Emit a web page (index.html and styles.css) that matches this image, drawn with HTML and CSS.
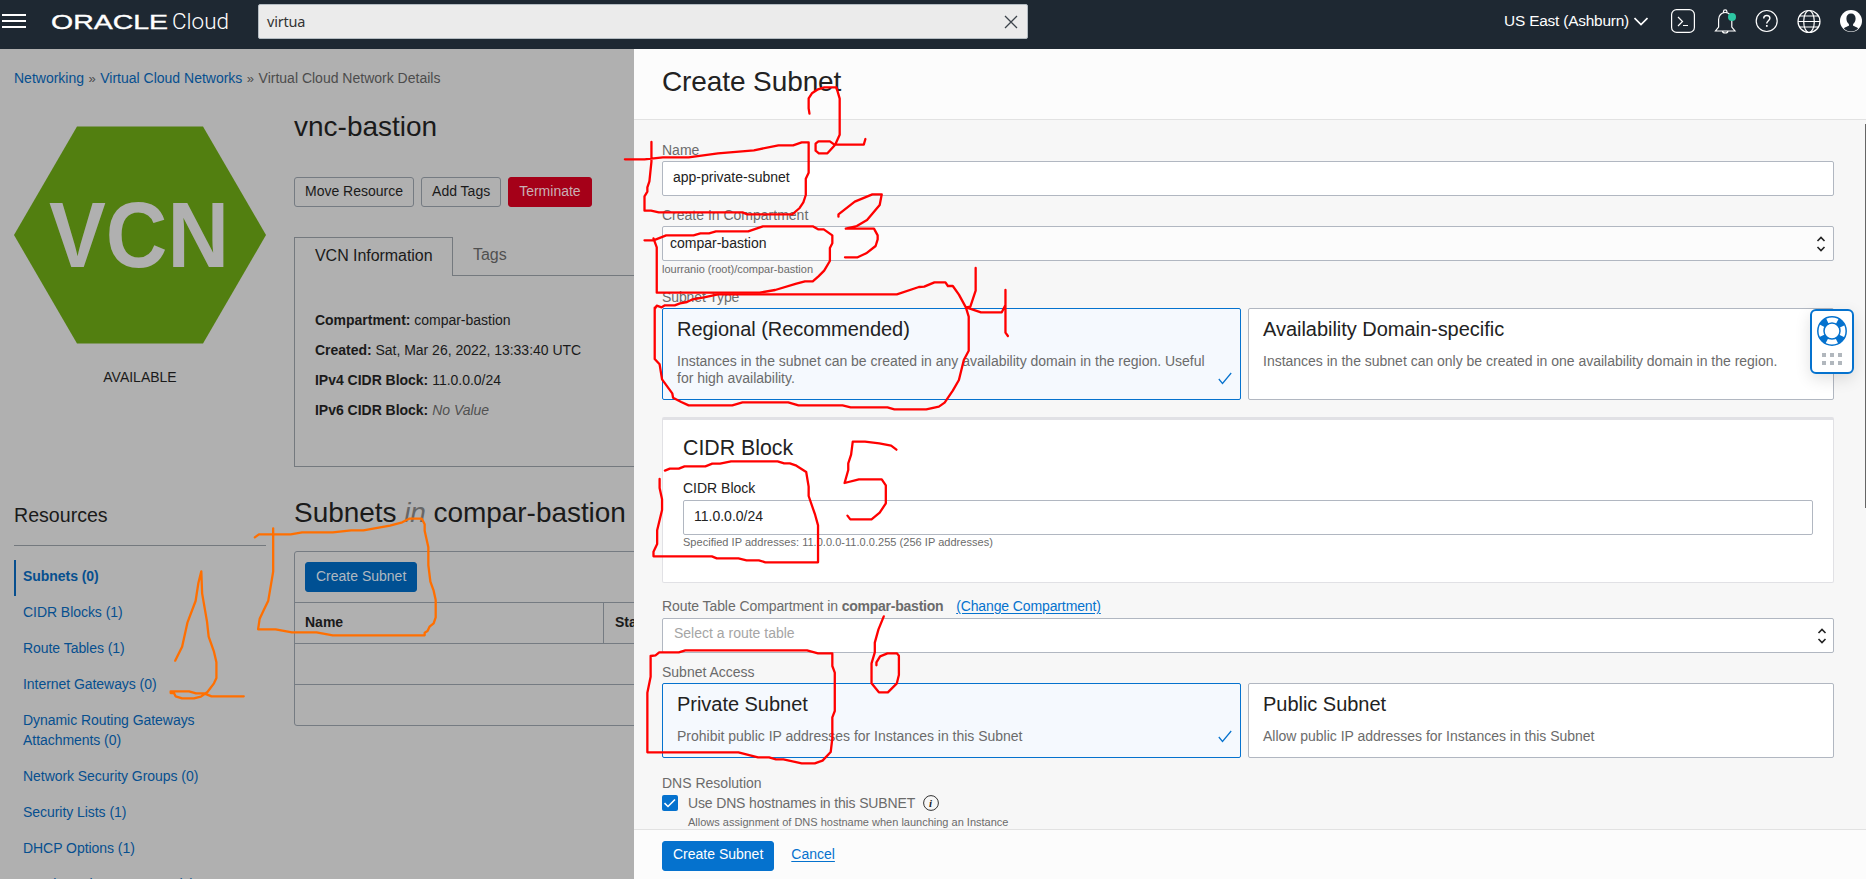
FILE: index.html
```html
<!DOCTYPE html>
<html lang="en">
<head>
<meta charset="utf-8">
<title>Create Subnet</title>
<link rel="stylesheet" href="styles.css">
</head>
<body>
<div class="app">
  <header class="topbar">
    <div class="burger"><i></i><i></i><i></i></div>
    <svg class="logo" width="180" height="30" viewBox="0 0 180 30">
      <text class="logo-oracle" x="-1" y="21.500" textLength="117" lengthAdjust="spacingAndGlyphs">ORACLE</text>
      <text class="logo-cloud" x="120" y="22" textLength="57" lengthAdjust="spacingAndGlyphs">Cloud</text>
    </svg>
    <div class="search"><span>virtua</span>
      <svg width="14" height="14" viewBox="0 0 14 14"><path d="M1 1l12 12M13 1L1 13" fill="none" stroke="#3c434b" stroke-width="1.3"/></svg>
    </div>
    <div class="region">US East (Ashburn)
      <svg width="14" height="9" viewBox="0 0 14 9"><path d="M.5 1l6.500 6.500L13.500 1" fill="none" stroke="#fff" stroke-width="1.700"/></svg>
    </div>
    <svg class="tools" width="196" height="30" viewBox="1670 6 196 30" fill="none" stroke="#fff" stroke-width="1.2">
      <rect x="1671.600" y="9.600" width="22.800" height="22.800" rx="5"/>
      <path d="M1678 17l4.500 4.500-4.500 4.500M1683 25.500h5"/>
      <path d="M1715.500 31h19.500l-3.200-4v-7.500c0-4-2.800-7-6.600-7s-6.600 3-6.600 7V27zM1722.500 31c0 1.300 1.100 2 2.700 2s2.700-.7 2.700-2M1723.500 12.500v-1a1.700 1.700 0 0 1 3.400 0v1"/>
      <circle cx="1732" cy="17" r="4" fill="#2dc6a3" stroke="none"/>
      <circle cx="1766.700" cy="21" r="10.500"/>
      <path d="M1763.700 18.500c0-1.900 1.200-3 3.100-3s3.100 1.100 3.100 2.800c0 2.300-3.200 2.600-3.200 5.200" stroke-width="1.400"/>
      <path d="M1766.800 25v1.800" stroke-width="1.700"/>
      <circle cx="1809" cy="21.500" r="11"/><ellipse cx="1809" cy="21.500" rx="5.300" ry="11"/>
      <path d="M1798 21.500h22M1799.500 16h19M1799.500 27h19"/>
      <circle cx="1851" cy="21" r="11" fill="#fff" stroke="none"/>
      <path d="M1851 13.500c-3 0-4.600 2-4.600 5 0 2.600 1 4.400 2.500 5.600v1.600c-1.600.8-4 1.300-5 2.800 1.700 1.900 4.300 3 7.100 3s5.400-1.100 7.100-3c-1-1.500-3.400-2-5-2.800v-1.600c1.500-1.200 2.500-3 2.500-5.600 0-3-1.600-5-4.600-5z" fill="#1e2832" stroke="none"/>
    </svg>
  </header>

  <div class="main">
    <section class="page">
      <nav class="crumbs"><a>Networking</a> <b>»</b> <a>Virtual Cloud Networks</a> <b>»</b> <span>Virtual Cloud Network Details</span></nav>
      <div class="cols">
        <aside class="side">
          <svg class="hex" width="252" height="218" viewBox="0 0 252 218">
            <path d="M0 109L63 .500h126L252 109l-63 108.500H63z" fill="#527f10"/>
            <text class="hex-text" x="35" y="140.500" textLength="180" lengthAdjust="spacingAndGlyphs">VCN</text>
          </svg>
          <div class="status">AVAILABLE</div>
          <h3 class="res-title">Resources</h3>
          <ul class="res-list">
            <li class="active">Subnets (0)</li>
            <li>CIDR Blocks (1)</li>
            <li>Route Tables (1)</li>
            <li>Internet Gateways (0)</li>
            <li>Dynamic Routing Gateways Attachments (0)</li>
            <li>Network Security Groups (0)</li>
            <li>Security Lists (1)</li>
            <li>DHCP Options (1)</li>
            <li>Local Peering Gateways (0)</li>
          </ul>
        </aside>
        <div class="detail">
          <h1 class="title">vnc-bastion</h1>
          <div class="actions"><span class="btn">Move Resource</span><span class="btn">Add Tags</span><span class="btn danger">Terminate</span></div>
          <div class="tabs"><div class="tab on">VCN Information</div><div class="tab off">Tags</div></div>
          <div class="info">
            <p><b>Compartment:</b> compar-bastion</p>
            <p><b>Created:</b> Sat, Mar 26, 2022, 13:33:40 UTC</p>
            <p><b>IPv4 CIDR Block:</b> 11.0.0.0/24</p>
            <p><b>IPv6 CIDR Block:</b> <i>No Value</i></p>
          </div>
          <h2 class="subtitle">Subnets <i>in</i> compar-bastion</h2>
          <div class="table">
            <div class="row tools-row"><span class="btn primary-dim">Create Subnet</span></div>
            <div class="row head"><span class="c1">Name</span><span class="c2">State</span></div>
            <div class="row"></div>
            <div class="row"></div>
          </div>
        </div>
      </div>
    </section>

    <section class="panel">
      <div class="panel-head"><h2>Create Subnet</h2></div>
      <div class="panel-body">
        <label class="lbl">Name</label>
        <div class="field">app-private-subnet</div>
        <label class="lbl gap">Create In Compartment</label>
        <div class="field select soft">compar-bastion
          <svg class="updown" width="10" height="16" viewBox="0 0 10 16"><path d="M1.500 5L5 1.500 8.500 5M1.500 11L5 14.500 8.500 11" fill="none" stroke="#222" stroke-width="1.600"/></svg>
        </div>
        <div class="hint">lourranio (root)/compar-bastion</div>
        <label class="lbl type">Subnet Type</label>
        <div class="cards tall">
          <div class="card sel"><h4>Regional (Recommended)</h4><p>Instances in the subnet can be created in any availability domain in the region. Useful for high availability.</p>
            <svg class="tick" width="14" height="13" viewBox="0 0 14 13"><path d="M.8 7l3.700 4.500L13.200 1" fill="none" stroke="#0572ce" stroke-width="1.200"/></svg></div>
          <div class="card"><h4>Availability Domain-specific</h4><p>Instances in the subnet can only be created in one availability domain in the region.</p></div>
        </div>
        <div class="block">
          <h3>CIDR Block</h3>
          <label class="lbl dark">CIDR Block</label>
          <div class="field">11.0.0.0/24</div>
          <div class="hint up">Specified IP addresses: 11.0.0.0-11.0.0.255 (256 IP addresses)</div>
        </div>
        <label class="lbl route">Route Table Compartment in <b>compar-bastion</b> <a class="link change">(Change Compartment)</a></label>
        <div class="field select ph">Select a route table
          <svg class="updown" width="10" height="16" viewBox="0 0 10 16"><path d="M1.500 5L5 1.500 8.500 5M1.500 11L5 14.500 8.500 11" fill="none" stroke="#222" stroke-width="1.600"/></svg>
        </div>
        <label class="lbl gap">Subnet Access</label>
        <div class="cards short">
          <div class="card sel"><h4>Private Subnet</h4><p>Prohibit public IP addresses for Instances in this Subnet</p>
            <svg class="tick" width="14" height="13" viewBox="0 0 14 13"><path d="M.8 7l3.700 4.500L13.200 1" fill="none" stroke="#0572ce" stroke-width="1.200"/></svg></div>
          <div class="card"><h4>Public Subnet</h4><p>Allow public IP addresses for Instances in this Subnet</p></div>
        </div>
        <label class="lbl dns">DNS Resolution</label>
        <div class="check-row">
          <svg width="16" height="16" viewBox="0 0 16 16"><rect width="16" height="16" rx="2" fill="#0572ce"/><path d="M2.500 8.200l3.500 3.300L13 4.500" fill="none" stroke="#fff" stroke-width="1.600"/></svg>
          <span>Use DNS hostnames in this SUBNET</span>
          <svg width="16" height="16" viewBox="0 0 16 16"><circle cx="8" cy="8" r="7.400" fill="none" stroke="#333" stroke-width="1"/><text class="info-i" x="6" y="12">i</text></svg>
        </div>
        <div class="hint in">Allows assignment of DNS hostname when launching an Instance</div>
      </div>
      <div class="panel-foot"><span class="btn primary">Create Subnet</span><a class="link">Cancel</a></div>
      <div class="scroll"></div>
    </section>
  </div>

  <div class="help">
    <svg width="40" height="61" viewBox="0 0 40 61">
      <circle cx="20" cy="20" r="11" fill="none" stroke="#0572ce" stroke-width="7" stroke-dasharray="7 10.280" stroke-dashoffset="-5.140"/>
      <circle cx="20" cy="20" r="14.200" fill="none" stroke="#0572ce" stroke-width="1.500"/>
      <circle cx="20" cy="20" r="8" fill="none" stroke="#0572ce" stroke-width="1.500"/>
      <path d="M10 42h4v4h-4zM18 42h4v4h-4zM26 42h4v4h-4zM10 50h4v4h-4zM18 50h4v4h-4zM26 50h4v4h-4z" fill="#b1b7bd"/>
    </svg>
  </div>

  <!-- Hand-drawn step markers over the page -->
  <svg class="ink" width="1866" height="879" viewBox="0 0 1866 879">
    <g class="orange" transform="translate(0 400) scale(.40833 .33333)">
      <path d="M624 412L634 403H712L740 397H815L860 391H890L955 377L985 367L1002 356H1033L1040 373V392L1049 442V495L1054 545L1062 572L1067 600V652L1062 670L1052 680L1047 693L1040 698V706H815L775 697H715L675 688H632L636 656L646 630L657 602L669 515V385"/>
      <path d="M429 782L446 740L459 668L479 603L486 548L493 514L495 580L507 665L511 710L524 755L530 787V834L524 850L508 876L492 890L475 895H446L430 889L426 879H418V874H463L480 880H500L518 889H597"/>
    </g>
    <g class="red" transform="translate(620 40) scale(.40833 .33333)">
      <path d="M12 358H60L105 352H168L240 340L328 331L388 316H424L445 307H462V398L455 416V465L449 487L440 504L422 523H312L300 517H95L76 512H60V469L67 455V442L72 424L77 365V306"/>
      <path d="M464 221L462 205V175L470 160L485 148L500 142H530L538 176V284L527 314L508 340H487L479 332V311L486 304H514L525 314H597L601 297"/>
      <path d="M60 601H82L113 586H180L197 580H218L235 574H314L350 559H472L485 568H499L520 586V610L514 624V663L500 692L486 709L472 724H453L432 731L380 750L342 758H90V622L82 595"/>
      <path d="M535 530V523L575 485L618 463H641L636 495L605 540L580 558L553 566H622L631 586V598L626 618L603 640L582 652H551"/>
      <path d="M86 805L90 797L102 802L110 796H134L147 790L164 786L178 778L206 772L240 763H678L732 741L745 740L770 727H797L803 738H815L830 764L847 802L854 830V932L842 960L830 1020L815 1052L795 1088L781 1100L750 1108H672L655 1102H565L545 1096H437L412 1087H300L275 1096H168L150 1086L130 1073L128 1060L103 1018L97 973L85 957V803"/>
      <path d="M871 684V752L858 800L848 802L884 817H935L944 795M944 750V878L950 888"/>
    </g>
    <g class="red" transform="translate(620 400) scale(.40833 .33333)">
      <path d="M110 212L122 206H144L158 199H209L226 191H245L272 184H386L402 190H416L432 197L456 216L462 260V288L478 345L485 376V487H356L340 481H310L290 475H237L225 469H82V455L91 432V391L103 330V298L97 264V237"/>
      <path d="M677 149L664 137L635 130L600 125H570L566 164L559 190V210L550 249L585 238H641L651 256V310L636 338L616 358H564L557 347"/>
      <path d="M646 649L633 688L624 728V757L616 790V850L624 862L634 877H656L678 850L683 825V767L678 760H655L637 769L628 787V796"/>
      <path d="M75 768L87 766L96 757H144L160 751H458L485 760H520V798L526 818V933L520 952V1015L516 1056L496 1082L477 1090H445L400 1078H382L365 1072H338L290 1057H67V878L75 830V768"/>
    </g>
  </svg>
</div>
</body>
</html>
```
FILE: styles.css
```css
* { box-sizing: border-box; }
body { margin: 0; font: 14px/20px "Liberation Sans", Arial, sans-serif; color: #222; overflow: hidden; }
h1, h2, h3, h4, p, ul { margin: 0; padding: 0; font-weight: normal; }
ul { list-style: none; }
.app { position: relative; width: 1866px; height: 879px; overflow: hidden; display: flex; flex-direction: column; }

/* Top bar */
.topbar { height: 49px; flex: none; background: #1e2832; display: flex; align-items: flex-start; }
.burger { width: 24px; margin: 14px 0 0 2px; display: flex; flex-direction: column; gap: 4px; }
.burger i { height: 2px; background: #fff; }
.logo { margin: 7px 0 0 26px; overflow: visible; }
.logo text { fill: #fff; }
.logo-oracle { font: 20px "Liberation Sans", sans-serif; stroke: #fff; stroke-width: .35px; }
.logo-cloud { font: 300 22px Roboto, "Liberation Sans", sans-serif; }
.search { width: 770px; height: 35px; margin: 4px 0 0 26px; padding: 0 9px 0 8px; background: #ebebeb; border: 1px solid #b4bcc2; border-radius: 2px; display: flex; align-items: center; justify-content: space-between; font: 14.5px/33px "Noto Sans", sans-serif; letter-spacing: -.2px; color: #333; }
.region { margin: 11px 0 0 auto; color: #fff; font-size: 15.4px; letter-spacing: -.2px; line-height: 20px; display: flex; align-items: center; gap: 5px; }
.tools { margin: 6px 0 0 22px; flex: none; }

.main { flex: 1; display: flex; min-height: 0; }

/* Dimmed page */
.page { width: 634px; flex: none; background: #b0b0b0; color: #1a1a1a; overflow: hidden; padding: 19px 0 0 14px; }
.crumbs { color: #4c4c4c; white-space: nowrap; height: 20px; }
.crumbs a, .res-list { color: #064f8f; }
.crumbs b { font-weight: normal; font-size: 13px; line-height: 1; margin: 0 .6px; }
.cols { display: flex; gap: 28px; }
.side { width: 252px; flex: none; padding-top: 38px; }
.hex { display: block; }
.hex-text { font: bold 93px "Liberation Sans", sans-serif; fill: #b0b0b0; }
.status { text-align: center; margin-top: 23px; }
.res-title { font-size: 19.6px; line-height: 24px; margin-top: 116px; height: 43px; border-bottom: 1px solid #74797e; margin-bottom: 14px; }
.res-list li { padding: 6px 40px 10px 9px; letter-spacing: -.05px; }
.res-list .active { border-left: 2px solid #064f8f; padding-left: 7px; font-weight: bold; }
.detail { width: 800px; flex: none; padding-top: 23px; }
.title, .subtitle { font-size: 28px; line-height: 32px; }
.subtitle i { color: #666; }
.actions { display: flex; gap: 7px; margin-top: 34px; }
.btn { display: inline-block; height: 30px; border: 1px solid #757b82; border-radius: 3px; padding: 0 10px; line-height: 26px; white-space: nowrap; }
.danger { background: #a50018; border-color: #a50018; color: #c9b0b4; }
.primary-dim { background: #005093; border-color: #005093; color: #b0b8c0; }
.primary { background: #0572ce; border-color: #0572ce; color: #fff; line-height: 25px; }
.tabs { display: flex; margin-top: 30px; font-size: 16px; height: 39px; letter-spacing: -.05px; }
.tab { line-height: 36px; }
.on { width: 159px; border: 1px solid #74797e; border-bottom: 0; padding-left: 20px; }
.off { flex: 1; border-bottom: 1px solid #74797e; padding-left: 20px; color: #505050; }
.info { height: 191px; border: 1px solid #74797e; border-top: 0; padding: 34px 20px; }
.info p { margin-bottom: 10px; letter-spacing: -.02px; }
.info i { color: #505050; }
.subtitle { margin-top: 30px; letter-spacing: -.05px; }
.table { margin-top: 22px; height: 175px; border: 1px solid #757b82; border-radius: 3px; }
.row { height: 41px; border-bottom: 1px solid #757b82; }
.row:last-child { border: 0; }
.tools-row { height: 51px; padding: 10px; }
.head { display: flex; font-weight: bold; line-height: 39px; }
.c1 { width: 309px; padding-left: 10px; border-right: 1px solid #757b82; }
.c2 { padding-left: 11px; }

/* Drawer */
.panel { position: relative; flex: 1; background: #f7f7f7; display: flex; flex-direction: column; min-width: 0; }
.panel-head { height: 71px; flex: none; background: #fcfcfc; border-bottom: 1px solid #e2e2e2; padding: 17px 28px 0; }
.panel-head h2 { font-size: 28px; line-height: 32px; letter-spacing: -.1px; }
.panel-body { flex: 1; min-height: 0; overflow: hidden; padding: 20px 32px 0 28px; }
.lbl { display: block; color: #6b6b6b; height: 21px; line-height: 20px; }
.field { height: 35px; background: #fff; border: 1px solid #b1b7c1; border-radius: 2px; padding: 0 10px; line-height: 31px; }
.select { display: flex; justify-content: space-between; align-items: center; }
.soft { background: #fcfcfc; padding: 0 7px; }
.ph { color: #a5a5a5; padding: 0 6px 0 11px; line-height: 29px; align-items: flex-start; }
.ph .updown { margin-top: 9px; }
.gap { margin-top: 9px; }
.hint { font-size: 11px; line-height: 16px; color: #6b6b6b; height: 16px; }
.up { line-height: 14px; letter-spacing: .03px; }
.type { margin-top: 10px; height: 21px; letter-spacing: -.1px; }
.route { height: 22px; letter-spacing: -.08px; }
.route b { letter-spacing: -.24px; }
.cards { display: grid; grid-template-columns: 579px 586px; gap: 7px; }
.tall { height: 92px; }
.short { height: 75px; }
.card { position: relative; background: #fff; border: 1px solid #b1b7c1; border-radius: 2px; padding: 8px 14px 0; color: #6b6b6b; line-height: 17px; }
.card h4 { font-size: 20px; line-height: 24px; color: #222; margin-bottom: 12px; letter-spacing: -.03px; }
.card p { width: 535px; letter-spacing: -.01px; }
.sel { background: #f5f9fe; border-color: #0572ce; }
.tick { position: absolute; right: 8px; bottom: 14px; }
.block { margin: 17px 0 13px; height: 166px; background: #fff; border: 1px solid #e1e1e5; border-top: 3px solid #e1e1e5; border-radius: 2px; padding: 15px 20px 0; }
.block h3 { font-size: 21.3px; line-height: 26px; margin-bottom: 17px; }
.dark { color: #222; height: 22px; }
.link { color: #0572ce; text-decoration: underline; text-underline-offset: 2px; }
.change { margin-left: 9px; letter-spacing: -.12px; }
.dns { margin-top: 15px; height: 20px; }
.check-row { display: flex; align-items: center; height: 20px; color: #6b6b6b; }
.check-row span { margin: 0 8px 0 10px; letter-spacing: -.15px; }
.info-i { font: italic bold 11px "Liberation Serif", serif; fill: #222; }
.in { margin-left: 26px; margin-top: 1px; }
.panel-foot { height: 50px; flex: none; background: #fcfcfc; border-top: 1px solid #e2e2e2; padding: 11px 28px; display: flex; gap: 17px; }
.panel-foot .link { line-height: 27px; }
.scroll { position: absolute; right: 0; top: 75px; width: 1px; height: 384px; background: #666; }

/* Floating help widget */
.help { position: absolute; left: 1810px; top: 309px; width: 44px; height: 65px; background: #fff; border: 2px solid #0572ce; border-radius: 6px; box-shadow: 0 5px 16px rgba(0, 0, 0, .12); }
.help svg { display: block; }

.ink { position: absolute; left: 0; top: 0; pointer-events: none; }
.ink path { fill: none; stroke-width: 2.3; stroke-linejoin: round; stroke-linecap: round; vector-effect: non-scaling-stroke; }
.orange { stroke: #ff6f00; }
.red { stroke: #f00; }
```
